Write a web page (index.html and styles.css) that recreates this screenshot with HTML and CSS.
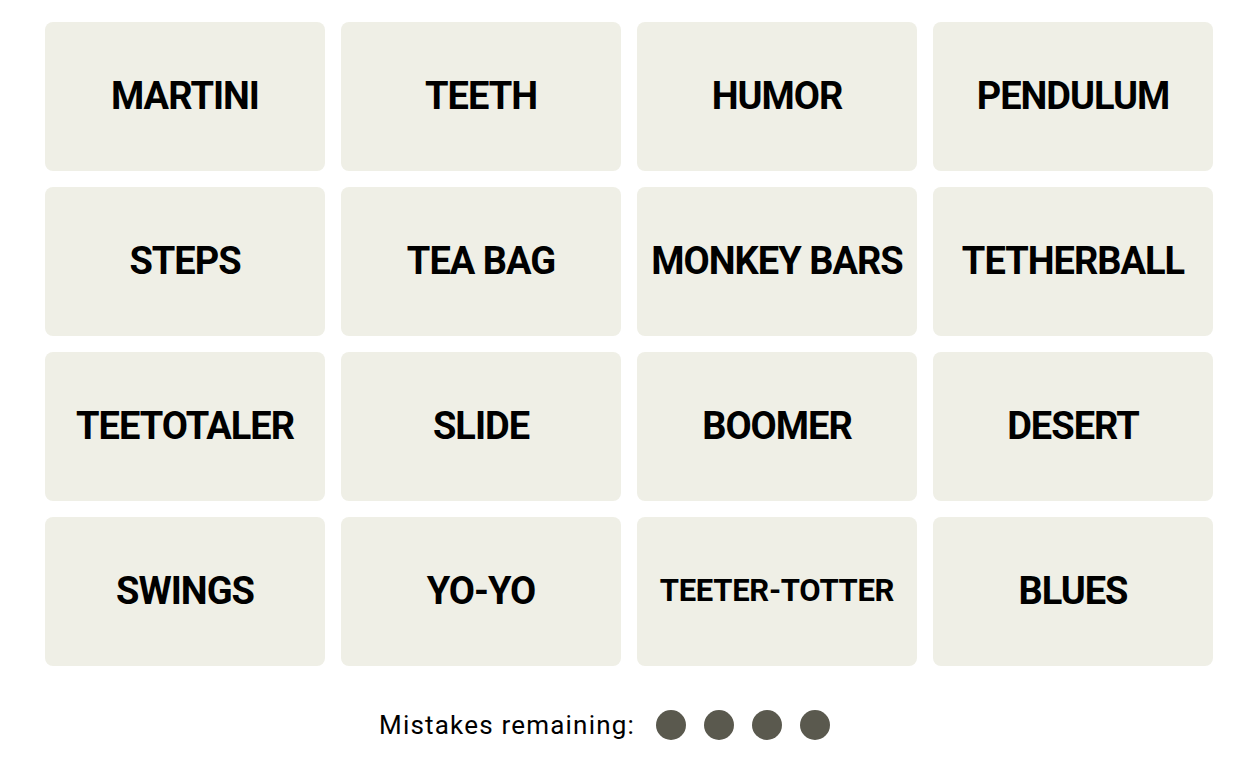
FILE: index.html
```html
<!DOCTYPE html>
<html lang="en">
<head>
<meta charset="UTF-8">
<title>Connections</title>
<link rel="stylesheet" href="styles.css">
</head>
<body>
<div class="board">
<div class="grid">
<div class="card">MARTINI</div>
<div class="card">TEETH</div>
<div class="card">HUMOR</div>
<div class="card">PENDULUM</div>
<div class="card">STEPS</div>
<div class="card">TEA BAG</div>
<div class="card">MONKEY BARS</div>
<div class="card">TETHERBALL</div>
<div class="card">TEETOTALER</div>
<div class="card">SLIDE</div>
<div class="card">BOOMER</div>
<div class="card">DESERT</div>
<div class="card">SWINGS</div>
<div class="card">YO-YO</div>
<div class="card card-small">TEETER-TOTTER</div>
<div class="card">BLUES</div>
</div>
<div class="mistakes">
<span class="mistakes-label">Mistakes remaining:</span>
<div class="dots">
<span class="dot"></span>
<span class="dot"></span>
<span class="dot"></span>
<span class="dot"></span>
</div>
</div>
</div>
</body>
</html>
```

FILE: styles.css
```css
:root {
    --tile-color: #efefe6;
    --dot-color: #5a594e;
    --text-color: #000;
}
* {
    margin: 0;
    padding: 0;
    box-sizing: border-box;
}
body {
    background: #fff;
    color: var(--text-color);
    font-family: Roboto, 'Liberation Sans', Arial, sans-serif;
}
.board {
    width: 1168px;
    margin-left: 45px;
    padding-top: 22px;
}
.grid {
    display: grid;
    grid-template-columns: repeat(4, 280px);
    grid-auto-rows: 149px;
    gap: 16px;
}
.card {
    background-color: var(--tile-color);
    border-radius: 8px;
    display: flex;
    align-items: center;
    justify-content: center;
    font-weight: bold;
    font-size: 38px;
    letter-spacing: -1px;
    text-transform: uppercase;
    padding-bottom: 2px;
}
.card-small {
    font-size: 31px;
    letter-spacing: -0.3px;
}
.mistakes {
    display: flex;
    align-items: center;
    height: 30px;
    margin-top: 44px;
    padding-left: 334px;
}
.mistakes-label {
    font-size: 26px;
    letter-spacing: 1.2px;
    margin-right: 21px;
}
.dots {
    display: flex;
    gap: 18px;
}
.dot {
    width: 30px;
    height: 30px;
    border-radius: 50%;
    background-color: var(--dot-color);
}
```
